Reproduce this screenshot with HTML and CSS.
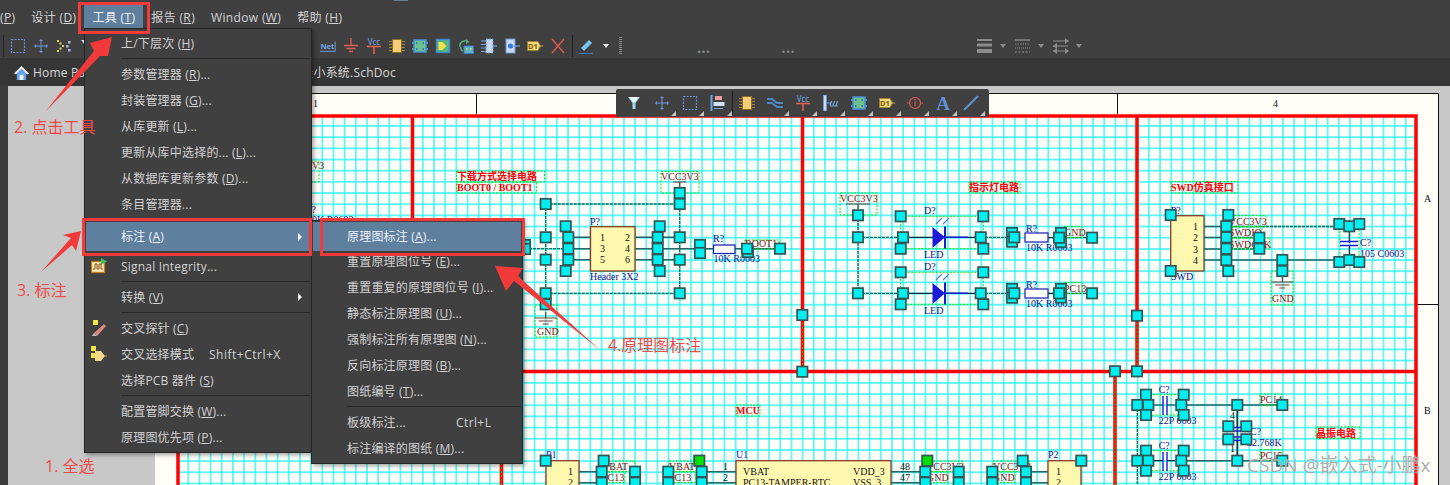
FILE: index.html
```html
<!DOCTYPE html>
<html lang="zh">
<head>
<meta charset="utf-8">
<title>Altium Designer</title>
<link rel="stylesheet" href="styles.css">
</head>
<body>
<svg class="defs" aria-hidden="true">
  <defs>
    <symbol id="i-sel" viewBox="0 0 16 16"><rect x="1.5" y="1.5" width="13" height="13" fill="none" stroke="#6f8fdc" stroke-width="1.2" stroke-dasharray="2 1.2"/></symbol>
    <symbol id="i-cross" viewBox="0 0 16 16"><path d="M8 1v14M1 8h14" stroke="#6f97d8" fill="none"/><path d="M6.5 2.5h3M6.5 13.5h3M2.5 6.5v3M13.5 6.5v3" stroke="#6f97d8" fill="none"/></symbol>
    <symbol id="i-dots" viewBox="0 0 16 16"><g fill="#e8d860"><rect x="1" y="2" width="2" height="2"/><rect x="3.500" y="4.500" width="2" height="2"/><rect x="6" y="7" width="2" height="2"/><rect x="3.500" y="9.500" width="2" height="2"/><rect x="1" y="12" width="2" height="2"/></g><g fill="#a9bcd8"><rect x="12" y="3" width="2.500" height="2.500"/><rect x="10" y="7" width="2.500" height="2.500"/><rect x="12" y="11" width="2.500" height="2.500"/></g></symbol>
    <symbol id="i-funnel" viewBox="0 0 16 16"><path d="M2 2h12L9.500 8v6H6.500V8Z" fill="#a9d6ea"/><path d="M3 2h10L9 7H7Z" fill="#e7f4fa"/></symbol>
    <symbol id="i-down" viewBox="0 0 16 16"><path d="M4 1h7v7h3l-6.500 7L1 8h3Z" fill="#5d8edb"/></symbol>
    <symbol id="i-net" viewBox="0 0 18 16"><text x="0.500" y="11.500" class="ico-net">Net</text><path d="M0 14h17V3" stroke="#6fa6e6" fill="none"/></symbol>
    <symbol id="i-gnd" viewBox="0 0 16 16"><path d="M8 0v7M1 7.500h14M3.500 10.500h9M6 13.500h4" stroke="#e25c4f" stroke-width="1.300" fill="none"/></symbol>
    <symbol id="i-vcc" viewBox="0 0 16 16"><text x="8" y="6.500" class="ico-vcc">Vcc</text><path d="M1 8.500h14M8 8.500V16" stroke="#e8604f" stroke-width="1.500" fill="none"/></symbol>
    <symbol id="i-chip" viewBox="0 0 16 16"><path d="M0 3.500h16M0 6.500h16M0 9.500h16M0 12.500h16" stroke="#a8873e"/><rect x="3.500" y="1.500" width="9" height="13" fill="#f3cd78" stroke="#8f6a25"/></symbol>
    <symbol id="i-green" viewBox="0 0 16 16"><path d="M0 5h16M0 11h16" stroke="#4a8fd8" stroke-width="2"/><rect x="2" y="2" width="12" height="12" fill="#6cc28d" stroke="#4a8fd8" stroke-width="1.500"/><path d="M4 5h1.500M4 11h1.500M10.500 5H12M10.500 11H12" stroke="#2d5fb0" stroke-width="1.500"/></symbol>
    <symbol id="i-sheet" viewBox="0 0 16 16"><rect x="1.500" y="1.500" width="13" height="13" fill="#54b87e" stroke="#3f86d1" stroke-width="1.500"/><path d="M3.500 4h4l4 4-4 4h-4Z" fill="#f0e050"/></symbol>
    <symbol id="i-recyc" viewBox="0 0 16 16"><path d="M2 9a5 5 0 0 1 8-5" stroke="#4fae7b" stroke-width="1.500" fill="none"/><path d="M8 1l3.500 3L8 6Z" fill="#4fae7b"/><path d="M3 9a3 3 0 0 0 2 4" stroke="#4fae7b" stroke-width="1.500" fill="none"/><rect x="6" y="8" width="9.500" height="7.500" fill="#5fb3c7" stroke="#3f78c8"/><path d="M8 11h1.500M12 11h1.500" stroke="#f0e050" stroke-width="1.500"/></symbol>
    <symbol id="i-port" viewBox="0 0 16 16"><path d="M0 3h5M0 6.500h5M0 10h5M0 13.500h5" stroke="#6fa6e6" stroke-width="1.200"/><rect x="5" y="1" width="7" height="14" fill="#c9daf6" stroke="#6f97d8" stroke-dasharray="2 1"/><path d="M12 8h4" stroke="#6fa6e6" stroke-width="1.200"/></symbol>
    <symbol id="i-dev" viewBox="0 0 16 16"><rect x="2" y="1" width="9" height="14" fill="#c9daf6" stroke="#6f97d8"/><circle cx="6.500" cy="8" r="2.600" fill="#3f78d8"/><path d="M9 8h7" stroke="#6fa6e6" stroke-width="1.200"/></symbol>
    <symbol id="i-d1" viewBox="0 0 16 16"><path d="M0.500 3.500H11L13.500 8 11 12.500H0.500Z" fill="#f2d878" stroke="#9b8530"/><path d="M13.500 8H16" stroke="#c9b24a"/><text x="6" y="11" class="ico-d1">D1</text></symbol>
    <symbol id="i-x" viewBox="0 0 16 16"><path d="M2 1l12 14M14 1L2 15" stroke="#e0594c" stroke-width="1.400" fill="none"/></symbol>
    <symbol id="i-pen" viewBox="0 0 16 16"><path d="M3 10L11 2l3 3-8 8H3Z" fill="#7cc4f4"/><path d="M3 10l3 3H3Z" fill="#2c2c2c"/><path d="M1 15.500h14" stroke="#3c78b8" stroke-width="1.200"/></symbol>
    <symbol id="i-lines" viewBox="0 0 16 16"><rect x="0" y="1" width="15" height="2" fill="#8c8c8c"/><rect x="0" y="5.500" width="15" height="3" fill="#8c8c8c"/><rect x="0" y="11" width="15" height="4" fill="#8c8c8c"/></symbol>
    <symbol id="i-dash" viewBox="0 0 16 16"><path d="M0 2h15" stroke="#8c8c8c" stroke-width="1.400"/><path d="M0 6h15" stroke="#8c8c8c" stroke-dasharray="1.500 1"/><path d="M0 10h15" stroke="#8c8c8c" stroke-dasharray="1 1"/><path d="M0 14h15" stroke="#8c8c8c" stroke-dasharray="2 1.500"/></symbol>
    <symbol id="i-arrows" viewBox="0 0 16 16"><path d="M0 3h15M0 8h15M0 13h15" stroke="#8c8c8c" stroke-width="1.200"/><path d="M12 0l4 3-4 3ZM4 5L0 8l4 3ZM12 10l4 3-4 3ZM4 10L0 13l4 3Z" fill="#8c8c8c"/></symbol>
    <symbol id="i-align" viewBox="0 0 16 16"><path d="M1.500 0v16" stroke="#6fa6e6" stroke-width="2"/><rect x="5" y="1" width="7" height="4" fill="#eba0a0"/><rect x="3.500" y="7" width="11" height="4" fill="#d5e3f6"/><path d="M4 13.500h9" stroke="#6fa6e6"/></symbol>
    <symbol id="i-wires" viewBox="0 0 16 16"><path d="M0 4h5l5 4h6M0 8h5l5 4h6" stroke="#4d86c0" stroke-width="2" fill="none"/></symbol>
    <symbol id="i-pinport" viewBox="0 0 16 16"><rect x="0.500" y="0" width="3" height="16" fill="#c9daf6" stroke="#6f97d8"/><path d="M4 8h4M7 11l1.500-5M10 11l1.500-5M13 11l1.500-5M7 11h8" stroke="#6fa6e6" stroke-width="1.200" fill="none"/></symbol>
    <symbol id="i-info" viewBox="0 0 16 16"><circle cx="8" cy="8" r="5.500" fill="none" stroke="#e0594c" stroke-width="1.200"/><path d="M0 8h2.500M13.500 8H16M8 6.500V11" stroke="#e0594c" stroke-width="1.200"/><circle cx="8" cy="4.800" r=".8" fill="#e0594c"/></symbol>
    <symbol id="i-a" viewBox="0 0 18 18"><text x="9" y="16" class="ico-a">A</text></symbol>
    <symbol id="i-line" viewBox="0 0 16 16"><path d="M1 15L15 1" stroke="#5f92d2" stroke-width="2"/></symbol>
    <symbol id="i-home" viewBox="0 0 16 16"><path d="M3 9v7h10V9L8 4Z" fill="#5fa4e8"/><rect x="6" y="10.500" width="4" height="5.500" fill="#f4f8ff"/><path d="M0 9l8-8 8 8-2 1-6-6-6 6Z" fill="#f2f4f8"/></symbol>
    <symbol id="i-si" viewBox="0 0 16 16"><rect x="0.500" y="3.500" width="13" height="11" fill="#fbe9b8" stroke="#c77a1a" stroke-width="1.300"/><path d="M2 11h2V6h2v5h2V6h2v5h2" stroke="#8c4f12" fill="none"/><path d="M10 0l6 3.500-6 3.500Z" fill="#3fbf5f"/></symbol>
    <symbol id="i-probe" viewBox="0 0 16 16"><rect x="2" y="0" width="5" height="5" fill="#f2e64a"/><path d="M3 13L13 4l2 2-9 10Z" fill="#e08a7c"/><path d="M0 17l3-4 3 3Z" fill="#bbb"/></symbol>
    <symbol id="i-xsel" viewBox="0 0 16 16"><rect x="0" y="0" width="5" height="5" fill="#f2e64a"/><rect x="0" y="7" width="5" height="5" fill="#f2e64a"/><path d="M4 5h6l4 5-4 5H4Z" fill="#f1d98b"/><path d="M14 10h2" stroke="#c9b24a"/></symbol>
  </defs>
</svg>

<div class="app">
  <nav class="menubar">
    <span class="mb-item mb-first">(<u>P</u>)</span>
    <span class="mb-item">设计 (<u>D</u>)</span>
    <span class="mb-item mb-active">工具 (<u>T</u>)</span>
    <span class="mb-item">报告 (<u>R</u>)</span>
    <span class="mb-item">Window (<u>W</u>)</span>
    <span class="mb-item">帮助 (<u>H</u>)</span>
  </nav>

  <div class="toolbar">
    <span class="grip-line"></span>
    <div class="tb-group tb-left">
      <svg class="ico"><use href="#i-sel"/></svg>
      <svg class="ico"><use href="#i-cross"/></svg>
      <svg class="ico"><use href="#i-dots"/></svg>
      <svg class="ico"><use href="#i-funnel"/></svg>
      <svg class="ico ico-tight"><use href="#i-down"/></svg>
    </div>
    <div class="tb-group tb-mid">
      <svg class="ico"><use href="#i-net"/></svg>
      <svg class="ico"><use href="#i-gnd"/></svg>
      <svg class="ico"><use href="#i-vcc"/></svg>
      <svg class="ico"><use href="#i-chip"/></svg>
      <svg class="ico"><use href="#i-green"/></svg>
      <svg class="ico"><use href="#i-sheet"/></svg>
      <svg class="ico"><use href="#i-recyc"/></svg>
      <svg class="ico"><use href="#i-port"/></svg>
      <svg class="ico"><use href="#i-dev"/></svg>
      <svg class="ico"><use href="#i-d1"/></svg>
      <svg class="ico"><use href="#i-x"/></svg>
      <span class="tb-sep"></span>
      <svg class="ico ico-pen"><use href="#i-pen"/></svg>
      <span class="caret caret-w"></span>
    </div>
    <span class="grip-dots"></span>
    <span class="more more-a">...</span>
    <span class="more more-b">...</span>
    <div class="tb-group tb-right">
      <svg class="ico"><use href="#i-lines"/></svg><span class="caret"></span>
      <svg class="ico"><use href="#i-dash"/></svg><span class="caret"></span>
      <svg class="ico"><use href="#i-arrows"/></svg><span class="caret"></span>
    </div>
  </div>

  <div class="tabbar">
    <div class="tab tab-home"><svg class="ico ico-home"><use href="#i-home"/></svg><span>Home Page</span></div>
    <div class="tab tab-doc"><span>STM32F103最小系统.SchDoc</span></div>
  </div>

  <main class="workspace">
    <div class="strip"></div>
    <svg class="sheet" width="1284" height="392" viewBox="155 93 1284 392">
      <defs>
        <pattern id="grid" patternUnits="userSpaceOnUse" x="3.955" y="-2.455" width="11.17" height="11.17">
          <path d="M5.585 0V11.170M0 5.585H11.170" stroke="#2af2f4" stroke-width="1.300" fill="none"/>
        </pattern>
        <g id="h"><rect x="-5.200" y="-5.200" width="10.400" height="10.400" class="hdl"/></g>
        <g id="hg"><rect x="-5.200" y="-5.200" width="10.400" height="10.400" class="hdl-g"/></g>
        <g id="gndsym"><path d="M0 -6V0M-11 0H11M-7 3H7M-3 6H3" class="w-brown"/></g>
      </defs>

      <rect x="155" y="93" width="1284" height="392" class="paper"/>
      <path d="M155 93.500H1438.500V485M476.500 93V114M797 93V114M1117.500 93V114M1417 304.500H1438" class="bline"/>
      <text x="313" y="107" class="t-blk">1</text>
      <text x="636" y="107" class="t-blk">2</text>
      <text x="957" y="107" class="t-blk">3</text>
      <text x="1273" y="107" class="t-blk">4</text>
      <text x="1424" y="202" class="t-blk">A</text>
      <text x="1424" y="414" class="t-blk">B</text>

      <rect x="178" y="115" width="1238" height="370" fill="url(#grid)"/>
      <path d="M178 116H1416V485M178 116V485M178 371.500H1416M412.500 116V371M802.500 116V371M1137 116V371M501.500 371V485M1115 371V485" class="red"/>
      <path d="M802.500 315V371M1137 315V371M1115 371V485M501.500 371V485" class="gd"/>

      <!-- wires -->
      <path d="M545.700 204H679.700M545.700 204V293.300M679.700 193V293.300M545.700 293.300H679.700M545.700 293.300V305M568 248.700H525" class="w-sel"/>
      <path d="M858 215V293.300M858 237.300H903M858 293.300H903M981 237.300H1012M981 293.300H1012M1059 237.700H1092M1059 293.300H1092" class="w-sel"/>
      <path d="M568 237.300H590.500M568 248.700H590.500M568 259.700H590.500M635 237.300H680M635 248.700H700M635 259.700H680" class="w-dark"/>
      <path d="M700 248.700H713.500M735 248.700H780" class="w-dark"/>
      <path d="M1204 226.500H1226M1204 237.500H1226M1204 249H1226M1204 260H1226M1226 260H1340M1282.300 260V271" class="w-dark"/>
      <path d="M1226 226.500H1340M1226 237.500H1260M1226 249H1260" class="w-sel"/>
      <path d="M1349.300 226V243M1349.300 246V260" class="w-blk"/>
      <path d="M1181 405H1282M1181 460.700H1282M1237.300 405V460.700" class="w-dark"/>
      <path d="M1137.300 405H1148M1137.300 405V485" class="w-sel"/>
      <path d="M1148 405H1163M1167 405H1181M1148 460.700H1163M1167 460.700H1181" class="w-blk"/>
      <path d="M601.700 471.700H579M601.700 482.700H579M701.700 471.700H736M701.700 482.700H736M891 471.700H925M891 482.700H925M1026 471.700H1048M1026 482.700H1048" class="w-dark"/>

      <!-- boxes around labels -->
      <g class="gbox">
        <rect x="297" y="161" width="22" height="21"/>
        <rect x="456.500" y="171" width="88" height="11"/>
        <rect x="456.500" y="182" width="80" height="11"/>
        <rect x="661" y="171.500" width="38" height="21.500"/>
        <rect x="535" y="305" width="22" height="32"/>
        <rect x="840" y="193" width="37" height="22"/>
        <rect x="969" y="182" width="51" height="11"/>
        <rect x="1171" y="181.500" width="67" height="11.500"/>
        <rect x="1271" y="271" width="22" height="34"/>
        <rect x="1231" y="215.500" width="35" height="11"/>
        <rect x="1232" y="227" width="30" height="11"/>
        <rect x="1232" y="238" width="38" height="11"/>
        <rect x="1064" y="226.500" width="18" height="11"/>
        <rect x="1064" y="282.500" width="18" height="11"/>
        <rect x="745" y="240" width="34" height="9"/>
        <rect x="736" y="405" width="24" height="11"/>
        <rect x="1260" y="394" width="22" height="11"/>
        <rect x="1260" y="449.500" width="22" height="11"/>
        <rect x="1316" y="427" width="44" height="11.500"/>
        <rect x="601" y="461" width="34" height="10.500"/>
        <rect x="601" y="472" width="24" height="10.500"/>
        <rect x="669" y="461" width="32" height="10.500"/>
        <rect x="669" y="472" width="26" height="10.500"/>
        <rect x="926" y="461" width="37" height="10.500"/>
        <rect x="926" y="472" width="22" height="10.500"/>
        <rect x="993" y="461" width="37" height="10.500"/>
        <rect x="993" y="472" width="22" height="10.500"/>
        <rect x="590.500" y="226.500" width="44.500" height="44.500"/>
        <rect x="900.700" y="216.300" width="82.600" height="32.400"/>
        <rect x="900.700" y="272.300" width="82.600" height="32"/>
        <rect x="1146" y="394.700" width="37.700" height="20.300"/>
        <rect x="1146" y="450.700" width="37.700" height="20"/>
        <rect x="1340" y="224" width="19" height="38"/>
      </g>

      <!-- components -->
      <rect x="590.500" y="226.700" width="44.500" height="44.300" class="comp"/>
      <rect x="1170.700" y="215.700" width="33.300" height="55.300" class="comp"/>
      <rect x="546" y="460.700" width="33" height="40" class="comp"/>
      <rect x="736" y="460.700" width="155" height="40" class="comp"/>
      <rect x="1048" y="460.700" width="33" height="40" class="comp"/>
      <rect x="713.500" y="245" width="21.500" height="8.500" class="res"/>
      <rect x="1025" y="233" width="23" height="9" class="res"/>
      <rect x="1025" y="289" width="23" height="9" class="res"/>
      <path d="M1048 237.700H1059M1048 293.300H1059M903 237.300H933M903 293.300H933M945 237.300H968M945 293.300H968M968 237.300H981M968 293.300H981" class="w-blk"/>
      <path d="M945 237.300H968M945 293.300H968" class="w-blue"/>
      <path d="M932.500 227L945 237.300L932.500 248ZM932.500 283L945 293.300L932.500 304Z" class="led"/>
      <path d="M945 226.500V248.500M945 282.500V304.500" class="w-cath"/>
      <path d="M936 224L942 218M943 224L949 218M936 280L942 274M943 280L949 274" class="w-ray"/>
      <path d="M1340 241.500H1358M1340 245.500H1358" class="w-blue"/>
      <path d="M1163 396V415M1167 396V415M1163 452V471M1167 452V471" class="w-blue"/>
      <path d="M1230 427.500H1245M1230 431H1245M1230 437H1245M1230 440.500H1245" class="w-blue"/>
      <path d="M1237.300 405V427M1237.300 441V460.700" class="w-blk"/>
      <use href="#gndsym" x="545.700" y="318"/>
      <use href="#gndsym" x="1282.300" y="282"/>
      <path d="M673 182H686M679.700 182V191M846 204H870M858 204V214" class="w-brown"/>

      <!-- labels -->
      <text x="312" y="169" class="t-net">V3</text>
      <text x="306" y="213" class="t-ref">P?</text>
      <text x="312" y="223" class="t-ref">0K R0603</text>
      <text x="457" y="180" class="t-title">下载方式选择电路</text>
      <text x="457" y="191" class="t-bold">BOOT0 / BOOT1</text>
      <text x="661" y="180" class="t-net">VCC3V3</text>
      <text x="590" y="225" class="t-ref">P?</text>
      <text x="590" y="280" class="t-ref">Header 3X2</text>
      <text x="600" y="241" class="t-blk">1</text>
      <text x="625" y="241" class="t-blk">2</text>
      <text x="600" y="252" class="t-blk">3</text>
      <text x="625" y="252" class="t-blk">4</text>
      <text x="600" y="263" class="t-blk">5</text>
      <text x="625" y="263" class="t-blk">6</text>
      <text x="537" y="335" class="t-net">GND</text>
      <text x="713" y="242" class="t-ref">R?</text>
      <text x="713.500" y="262" class="t-ref">10K R0603</text>
      <text x="745" y="247" class="t-net">BOOT1</text>
      <text x="840" y="202" class="t-net">VCC3V3</text>
      <text x="969" y="191" class="t-title">指示灯电路</text>
      <text x="924" y="214" class="t-led">D?</text>
      <text x="924" y="258" class="t-led">LED</text>
      <text x="924" y="270" class="t-led">D?</text>
      <text x="924" y="314" class="t-led">LED</text>
      <text x="1026" y="232" class="t-ref">R?</text>
      <text x="1026" y="251" class="t-ref">10K R0603</text>
      <text x="1064" y="236" class="t-net">GND</text>
      <text x="1026" y="288" class="t-ref">R?</text>
      <text x="1026" y="307" class="t-ref">10K R0603</text>
      <text x="1064" y="292" class="t-net">PC13</text>
      <text x="1171" y="191" class="t-title">SWD仿真接口</text>
      <text x="1170.700" y="214" class="t-ref">P?</text>
      <text x="1171" y="280" class="t-ref">SWD</text>
      <text x="1193" y="230" class="t-blk">1</text>
      <text x="1193" y="241" class="t-blk">2</text>
      <text x="1193" y="252.500" class="t-blk">3</text>
      <text x="1193" y="263.500" class="t-blk">4</text>
      <text x="1229" y="224.500" class="t-net">VCC3V3</text>
      <text x="1229" y="236" class="t-net">SWDIO</text>
      <text x="1229" y="248" class="t-net">SWDCLK</text>
      <text x="1360" y="246" class="t-ref">C?</text>
      <text x="1360" y="257" class="t-ref">105 C0603</text>
      <text x="1272" y="302" class="t-net">GND</text>
      <text x="736" y="414" class="t-title">MCU</text>
      <text x="1158.700" y="393" class="t-ref">C?</text>
      <text x="1158.700" y="424" class="t-ref">22P 0603</text>
      <text x="1158.700" y="449" class="t-ref">C?</text>
      <text x="1158.700" y="480" class="t-ref">22P 0603</text>
      <text x="1260" y="403" class="t-net">PC14</text>
      <text x="1260" y="459" class="t-net">PC15</text>
      <text x="1250" y="435" class="t-ref">C?</text>
      <text x="1247" y="446" class="t-ref">32.768K</text>
      <text x="1230" y="419" class="t-blk">4</text>
      <text x="1230" y="452" class="t-blk">1</text>
      <text x="1316" y="437" class="t-title">晶振电路</text>
      <text x="546" y="458" class="t-blue">P1</text>
      <text x="736" y="458" class="t-blue">U1</text>
      <text x="1048" y="458" class="t-ref">P2</text>
      <text x="568" y="475" class="t-blk">1</text>
      <text x="568" y="486" class="t-blk">2</text>
      <text x="1056" y="475" class="t-blk">1</text>
      <text x="1056" y="486" class="t-blk">2</text>
      <text x="602" y="470" class="t-net">VBAT</text>
      <text x="602" y="481" class="t-net">PC13</text>
      <text x="669" y="470" class="t-net">VBAT</text>
      <text x="669" y="481" class="t-net">PC13</text>
      <text x="723" y="470" class="t-blk">1</text>
      <text x="723" y="481" class="t-blk">2</text>
      <text x="743" y="475" class="t-blk">VBAT</text>
      <text x="743" y="486" class="t-blk">PC13-TAMPER-RTC</text>
      <text x="853" y="475" class="t-blk">VDD_3</text>
      <text x="853" y="486" class="t-blk">VSS_3</text>
      <text x="900" y="470" class="t-blk">48</text>
      <text x="900" y="481" class="t-blk">47</text>
      <text x="926" y="470" class="t-net">VCC3V3</text>
      <text x="927" y="481" class="t-net">GND</text>
      <text x="993" y="470" class="t-net">VCC3V3</text>
      <text x="993" y="481" class="t-net">GND</text>

      <!-- selection handles -->
      <g>
        <use href="#h" x="525" y="245"/><use href="#h" x="525" y="249"/>
        <use href="#h" x="545.700" y="204"/><use href="#h" x="679.700" y="204"/><use href="#h" x="679.700" y="193"/>
        <use href="#h" x="545.700" y="237.300"/><use href="#h" x="545.700" y="259.700"/><use href="#h" x="545.700" y="293.300"/><use href="#h" x="679.700" y="293.300"/><use href="#h" x="545.700" y="304.300"/>
        <use href="#h" x="565.700" y="226.300"/><use href="#h" x="568.300" y="237.300"/><use href="#h" x="568.300" y="248.700"/><use href="#h" x="568.300" y="259.700"/><use href="#h" x="565.700" y="271"/>
        <use href="#h" x="659.700" y="226.300"/><use href="#h" x="657.700" y="237.300"/><use href="#h" x="657.700" y="248.700"/><use href="#h" x="657.700" y="259.700"/><use href="#h" x="659.700" y="271"/>
        <use href="#h" x="679.700" y="237.300"/><use href="#h" x="679.700" y="259.700"/>
        <use href="#h" x="700" y="245"/><use href="#h" x="700" y="253"/><use href="#h" x="748" y="252"/><use href="#h" x="747" y="248.700"/><use href="#h" x="780" y="248.700"/>
        <use href="#h" x="802.300" y="315"/><use href="#h" x="802.300" y="371.700"/>
        <use href="#h" x="858" y="215.300"/><use href="#h" x="858" y="237.300"/><use href="#h" x="858" y="293.300"/>
        <use href="#h" x="900.700" y="216.300"/><use href="#h" x="903" y="237.300"/><use href="#h" x="900.700" y="248.700"/><use href="#h" x="983.300" y="216.300"/><use href="#h" x="980.700" y="237.300"/><use href="#h" x="983.300" y="248.700"/>
        <use href="#h" x="900.700" y="272.300"/><use href="#h" x="903" y="293.300"/><use href="#h" x="900.700" y="304.300"/><use href="#h" x="983.300" y="272.300"/><use href="#h" x="980.700" y="293.300"/><use href="#h" x="983.300" y="304.300"/>
        <use href="#h" x="1012" y="233"/><use href="#h" x="1012" y="241.700"/><use href="#h" x="1014.300" y="237.300"/><use href="#h" x="1012" y="289"/><use href="#h" x="1012" y="297.700"/><use href="#h" x="1014.300" y="293.300"/>
        <use href="#h" x="1061" y="233"/><use href="#h" x="1061" y="242"/><use href="#h" x="1059" y="237.700"/><use href="#h" x="1092" y="237.700"/>
        <use href="#h" x="1061" y="289"/><use href="#h" x="1061" y="297.500"/><use href="#h" x="1059" y="293.300"/><use href="#h" x="1092" y="293.300"/>
        <use href="#h" x="1137" y="315.700"/><use href="#h" x="1115" y="371.300"/><use href="#h" x="1137" y="371.300"/>
        <use href="#h" x="1170.700" y="215"/><use href="#h" x="1228.300" y="215"/><use href="#h" x="1170.700" y="271"/><use href="#h" x="1228.300" y="271"/>
        <use href="#h" x="1226.300" y="226.300"/><use href="#h" x="1226.300" y="237.300"/><use href="#h" x="1226.300" y="248.700"/><use href="#h" x="1226.300" y="260"/>
        <use href="#h" x="1259.300" y="237.700"/><use href="#h" x="1259.300" y="248.700"/><use href="#h" x="1282.300" y="260"/><use href="#h" x="1282.300" y="271"/>
        <use href="#h" x="1339.300" y="224"/><use href="#h" x="1349.300" y="226.300"/><use href="#h" x="1359.300" y="224"/><use href="#h" x="1339.300" y="262"/><use href="#h" x="1349.300" y="260"/><use href="#h" x="1359.300" y="262"/>
        <use href="#h" x="1146" y="394.700"/><use href="#h" x="1183.700" y="394.700"/><use href="#h" x="1137.300" y="405"/><use href="#h" x="1148.300" y="405"/><use href="#h" x="1181.300" y="405"/><use href="#h" x="1146" y="415"/><use href="#h" x="1183.700" y="415"/>
        <use href="#h" x="1146" y="450.700"/><use href="#h" x="1183.700" y="450.700"/><use href="#h" x="1137.300" y="460.700"/><use href="#h" x="1148.300" y="460.700"/><use href="#h" x="1181.300" y="460.700"/><use href="#h" x="1146" y="470.700"/><use href="#h" x="1183.700" y="470.700"/>
        <use href="#h" x="1237.300" y="405"/><use href="#h" x="1282.300" y="405"/><use href="#h" x="1237.300" y="460.700"/><use href="#h" x="1282.300" y="460.700"/>
        <use href="#h" x="1228.300" y="426.300"/><use href="#h" x="1246.300" y="426.300"/><use href="#h" x="1228.300" y="439.300"/><use href="#h" x="1246.300" y="439.300"/>
        <use href="#h" x="545.700" y="460.700"/><use href="#h" x="603.700" y="460.700"/><use href="#h" x="601.700" y="471.700"/><use href="#h" x="601.700" y="482.700"/><use href="#h" x="635" y="471.700"/><use href="#h" x="635" y="482.700"/>
        <use href="#h" x="668.300" y="471.700"/><use href="#h" x="668.300" y="482.700"/><use href="#h" x="701.700" y="471.700"/><use href="#h" x="701.700" y="482.700"/><use href="#hg" x="699.300" y="460.700"/>
        <use href="#h" x="925.300" y="471.700"/><use href="#h" x="925.300" y="482.700"/><use href="#hg" x="927.300" y="460.700"/><use href="#h" x="958.700" y="471.700"/><use href="#h" x="958.700" y="482.700"/>
        <use href="#h" x="992.300" y="471.700"/><use href="#h" x="992.300" y="482.700"/><use href="#h" x="1022.700" y="460.700"/><use href="#h" x="1026" y="471.700"/><use href="#h" x="1026" y="482.700"/><use href="#h" x="1081.300" y="460.700"/>
      </g>
    </svg>
  </main>

  <div class="floatbar">
    <span class="fb-item"><svg class="ico"><use href="#i-funnel"/></svg></span>
    <span class="fb-item fb-more"><svg class="ico"><use href="#i-cross"/></svg></span>
    <span class="fb-item fb-more"><svg class="ico"><use href="#i-sel"/></svg></span>
    <span class="fb-item fb-more"><svg class="ico"><use href="#i-align"/></svg></span>
    <span class="fb-sep"></span>
    <span class="fb-item"><svg class="ico"><use href="#i-chip"/></svg></span>
    <span class="fb-item fb-more"><svg class="ico"><use href="#i-wires"/></svg></span>
    <span class="fb-item fb-more"><svg class="ico"><use href="#i-vcc"/></svg></span>
    <span class="fb-item fb-more"><svg class="ico"><use href="#i-pinport"/></svg></span>
    <span class="fb-item fb-more"><svg class="ico"><use href="#i-green"/></svg></span>
    <span class="fb-item fb-more"><svg class="ico"><use href="#i-d1"/></svg></span>
    <span class="fb-item fb-more"><svg class="ico"><use href="#i-info"/></svg></span>
    <span class="fb-item fb-more"><svg class="ico ico-a-wrap"><use href="#i-a"/></svg></span>
    <span class="fb-item fb-more"><svg class="ico"><use href="#i-line"/></svg></span>
  </div>

  <div class="menu menu-tools">
    <div class="mi">上/下层次 (<u>H</u>)</div>
    <div class="ms"></div>
    <div class="mi">参数管理器 (<u>R</u>)...</div>
    <div class="mi">封装管理器 (<u>G</u>)...</div>
    <div class="mi">从库更新 (<u>L</u>)...</div>
    <div class="mi">更新从库中选择的... (<u>L</u>)...</div>
    <div class="mi">从数据库更新参数 (<u>D</u>)...</div>
    <div class="mi">条目管理器...</div>
    <div class="ms"></div>
    <div class="mi mi-active mi-sub">标注 (<u>A</u>)</div>
    <div class="ms"></div>
    <div class="mi"><svg class="mi-ico"><use href="#i-si"/></svg>Signal Integrity...</div>
    <div class="ms"></div>
    <div class="mi mi-sub">转换 (<u>V</u>)</div>
    <div class="ms"></div>
    <div class="mi"><svg class="mi-ico"><use href="#i-probe"/></svg>交叉探针 (<u>C</u>)</div>
    <div class="mi"><svg class="mi-ico"><use href="#i-xsel"/></svg>交叉选择模式<span class="key key-a">Shift+Ctrl+X</span></div>
    <div class="mi">选择PCB 器件 (<u>S</u>)</div>
    <div class="ms"></div>
    <div class="mi">配置管脚交换 (<u>W</u>)...</div>
    <div class="mi">原理图优先项 (<u>P</u>)...</div>
  </div>

  <div class="menu menu-anno">
    <div class="mi mi-active">原理图标注 (<u>A</u>)...</div>
    <div class="mi">重置原理图位号 (<u>E</u>)...</div>
    <div class="mi">重置重复的原理图位号 (<u>I</u>)...</div>
    <div class="mi">静态标注原理图 (<u>U</u>)...</div>
    <div class="mi">强制标注所有原理图 (<u>N</u>)...</div>
    <div class="mi">反向标注原理图 (<u>B</u>)...</div>
    <div class="mi">图纸编号 (<u>T</u>)...</div>
    <div class="ms"></div>
    <div class="mi">板级标注...<span class="key key-b">Ctrl+L</span></div>
    <div class="mi">标注编译的图纸 (<u>M</u>)...</div>
  </div>

  <span class="mark mark-tools"></span>
  <span class="mark mark-anno"></span>
  <span class="mark mark-sch"></span>
  <span class="top-tick"></span>

  <svg class="arrows" width="1450" height="485" viewBox="0 0 1450 485">
    <path d="M45 112L94 51L90 43L112 37L108 56L100 56Z"/>
    <path d="M41 272L71 238L63 235L81 231L76 251L72 245Z"/>
    <path d="M600 350L514 281L506 291L495 266L523 268L518 276Z"/>
  </svg>

  <span class="note note-2">2. 点击工具</span>
  <span class="note note-3">3. 标注</span>
  <span class="note note-1">1. 全选</span>
  <span class="note note-4">4.原理图标注</span>
  <span class="watermark">CSDN @嵌入式-小鹏x</span>
</div>
</body>
</html>
```
FILE: styles.css
```css
* { box-sizing: border-box; }
html, body { margin: 0; padding: 0; height: 100%; overflow: hidden; background: #404040; }
body { font-family: "Open Sans", "Noto Sans CJK SC", sans-serif; font-size: 12px; color: #d4d4d4; }
u { text-decoration-thickness: 1px; text-underline-offset: 1px; }

.defs { position: absolute; width: 0; height: 0; }
.app { position: relative; width: 1450px; height: 485px; overflow: hidden; display: flex; flex-direction: column; }

/* menu bar */
.menubar { height: 33px; flex: none; display: flex; align-items: center; background: #404040; padding-top: 1px; letter-spacing: 0.35px; }
.mb-item { padding: 0 8px; line-height: 25px; white-space: nowrap; }
.mb-first { padding-left: 0; }
.mb-active { background: #5f7f9f; color: #f2f2f2; }

/* main toolbar */
.toolbar { height: 25px; flex: none; display: flex; align-items: center; background: #404040; position: relative; }
.ico { width: 16px; height: 16px; flex: none; display: block; overflow: visible; }
.ico-tight { margin-left: -10px; }
.ico-pen { margin-left: -1px; }
.ico-home { width: 15px; height: 15px; }
.ico-a-wrap { width: 18px; height: 18px; }
.grip-line { width: 1px; height: 22px; margin-left: 3px; background: #262626; flex: none; }
.tb-group { display: flex; align-items: center; gap: 7px; flex: none; }
.tb-left { margin-left: 6px; }
.tb-mid { margin-left: 212px; }
.tb-sep { width: 1px; height: 22px; background: #1f1f1f; margin: 0 -1px 0 -1px; flex: none; }
.caret { width: 0; height: 0; border-left: 3px solid transparent; border-right: 3px solid transparent; border-top: 4px solid #8c8c8c; flex: none; margin-right: 9px; margin-left: 7px; }
.caret-w { border-top-color: #eee; margin: 0 0 0 2px; }
.grip-dots { width: 3px; height: 18px; margin-left: 10px; flex: none; background: repeating-linear-gradient(to bottom, #8a8a8a 0 1px, transparent 1px 2px); }
.more { flex: none; color: #8a8a8a; font-size: 14px; font-weight: 700; line-height: 10px; height: 10px; letter-spacing: 0.5px; }
.more-a { margin-left: 75px; margin-top: 4px; }
.more-b { margin-left: 71px; margin-top: 4px; }
.tb-right { margin-left: 182px; gap: 0; }
.ico-net { font: 700 8.500px "Noto Sans", sans-serif; fill: #6fa6e6; }
.ico-vcc { font: 8px "Noto Sans", sans-serif; fill: #6fa6e6; text-anchor: middle; }
.ico-d1 { font: 700 7.500px "Noto Sans", sans-serif; fill: #7b5d12; text-anchor: middle; }
.ico-a { font: 700 19px "Liberation Serif", serif; fill: #5f92d2; text-anchor: middle; }

/* tab bar */
.tabbar { height: 28px; flex: none; display: flex; align-items: center; background: #363636; padding-left: 14px; }
.tab { display: flex; align-items: center; gap: 4px; white-space: nowrap; color: #d8d8d8; letter-spacing: 0.2px; }
.tab-doc { margin-left: 136px; }

/* workspace */
.workspace { flex: 1; min-height: 0; display: flex; background: #c8c8c8; padding-top: 7px; overflow: hidden; }
.strip { width: 8px; flex: none; background: #3c3c3c; margin-top: -7px; margin-right: 147px; }
.sheet { display: block; flex: none; }
.paper { fill: #fffdf8; }
.bline { fill: none; stroke: #111; stroke-width: 1; }
.red { fill: none; stroke: #fa0505; stroke-width: 3.500; }
.gd { fill: none; stroke: #20c020; stroke-width: 1; stroke-dasharray: 2 2; }
.w-sel { fill: none; stroke: #1d6a55; stroke-width: 1.300; stroke-dasharray: 3 1; }
.w-dark { fill: none; stroke: #2a6464; stroke-width: 1.600; }
.w-blk { fill: none; stroke: #10303a; stroke-width: 1.200; }
.w-blue { fill: none; stroke: #1a1ad8; stroke-width: 1.400; }
.w-cath { fill: none; stroke: #1a1ad8; stroke-width: 2; }
.w-ray { fill: none; stroke: #5a7ae8; stroke-width: 1.200; }
.w-brown { fill: none; stroke: #7d3a30; stroke-width: 1.200; }
.led { fill: #1a1ad8; }
.gbox rect { fill: none; stroke: #18e018; stroke-width: 1; stroke-dasharray: 2 1.500; }
.comp { fill: #fff9b0; stroke: #8a3a28; stroke-width: 1.300; }
.res { fill: #fffdf8; stroke: #1a1ab8; stroke-width: 1.200; }
.hdl { fill: #00eef0; stroke: #2f5658; stroke-width: 1.700; }
.hdl-g { fill: #00e000; stroke: #2f5658; stroke-width: 1.700; }

.sheet text { font-family: "Liberation Serif", serif; font-size: 10px; }
.sheet .t-blk { fill: #101020; }
.sheet .t-ref { fill: #14148c; }
.sheet .t-blue { fill: #1a1ae0; }
.sheet .t-led { fill: #14148c; }
.sheet .t-net { fill: #8a1414; }
.sheet .t-bold { fill: #f00; font-weight: 700; }
.sheet .t-title { fill: #f00; font-weight: 700; font-family: "Liberation Serif", "Noto Sans CJK SC", serif; }

/* floating toolbar */
.floatbar { position: absolute; left: 616px; top: 89px; height: 28px; width: 373px; padding-left: 4px; display: flex; align-items: center; background: #404040; border-radius: 2px; }
.fb-item { width: 28px; height: 28px; flex: none; display: flex; align-items: center; justify-content: center; position: relative; }
.fb-more::after { content: ""; position: absolute; right: 0; bottom: 1px; width: 0; height: 0; border-left: 5px solid transparent; border-bottom: 5px solid #c4c4c4; }
.fb-sep { width: 1px; height: 24px; background: #1f1f1f; flex: none; }

/* drop-down menus */
.menu { position: absolute; background: #404040; border: 1px solid #262626; box-shadow: 2px 2px 4px rgba(0,0,0,.35); padding: 1px; display: flex; flex-direction: column; letter-spacing: 0.2px; }
.menu-tools { left: 84px; top: 28px; width: 228px; height: 425px; }
.menu-anno { left: 311px; top: 220px; width: 212px; height: 244px; }
.mi { height: 26px; flex: none; display: flex; align-items: center; padding-left: 34px; white-space: pre; position: relative; color: #d2d2d2; }
.menu-tools .mi { padding-left: 35px; }
.mi-active { background: #5f7f9f; color: #eef2f6; height: 29px; margin: 0 0 -3px; padding-bottom: 1px; }
.mi-sub::after { content: ""; position: absolute; right: 8px; top: 50%; margin-top: -4px; border-left: 4px solid #f0f0f0; border-top: 4px solid transparent; border-bottom: 4px solid transparent; }
.ms { height: 1px; flex: none; margin: 2px 0 2px 35px; background: #2a2a2a; }
.menu-anno .ms { margin-left: 34px; }
.mi-ico { position: absolute; left: 5px; top: 5px; width: 16px; height: 16px; overflow: visible; }
.key { position: absolute; white-space: nowrap; }
.key-a { left: 123px; letter-spacing: 0.5px; }
.key-b { left: 143px; letter-spacing: 0.4px; }

/* red tutorial marks */
.mark { position: absolute; border: 3px solid #f23a3a; }
.mark-tools { left: 78px; top: 2px; width: 72px; height: 32px; }
.mark-anno { left: 82px; top: 218px; width: 230px; height: 38px; }
.mark-sch { left: 320px; top: 218px; width: 205px; height: 38px; }
.top-tick { position: absolute; left: 394px; top: 0; width: 14px; height: 1px; background: #5f7f9f; }
.arrows { position: absolute; left: 0; top: 0; }
.arrows path { fill: #f23a3a; }
.note { position: absolute; color: #f04a4a; font-size: 16px; line-height: 20px; white-space: nowrap; }
.note-2 { left: 14px; top: 117px; }
.note-3 { left: 17px; top: 280px; }
.note-1 { left: 45px; top: 456px; }
.note-4 { left: 608px; top: 335px; }
.watermark { position: absolute; left: 1247px; top: 452px; font-size: 19px; line-height: 26px; color: rgba(120,120,120,.62); white-space: nowrap; text-shadow: 0 0 1px #fff; }
```
